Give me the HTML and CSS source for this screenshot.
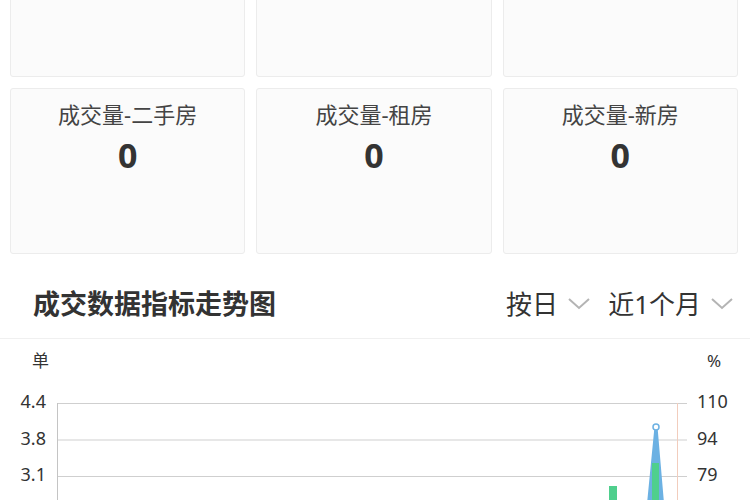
FILE: index.html
```html
<!DOCTYPE html>
<html>
<head>
    <meta charset="utf-8">
    <title>成交数据</title>
    <link rel="stylesheet" href="styles.css">
</head>
<body>
    <div class="stats">
        <div class="card"></div>
        <div class="card"></div>
        <div class="card"></div>
        <div class="card">
            <div class="card-title">成交量-二手房</div>
            <div class="card-value">0</div>
        </div>
        <div class="card">
            <div class="card-title">成交量-租房</div>
            <div class="card-value">0</div>
        </div>
        <div class="card">
            <div class="card-title">成交量-新房</div>
            <div class="card-value">0</div>
        </div>
    </div>

    <div class="trend-head">
        <h2 class="trend-title">成交数据指标走势图</h2>
        <div class="filters">
            <span class="filter">按日
                <svg class="chevron" width="22" height="12" viewBox="0 0 22 12"><polyline points="1,1 11,10 21,1"/></svg>
            </span>
            <span class="filter">近1个月
                <svg class="chevron" width="22" height="12" viewBox="0 0 22 12"><polyline points="1,1 11,10 21,1"/></svg>
            </span>
        </div>
    </div>

    <div class="chart">
        <svg width="750" height="161" viewBox="0 0 750 161">
            <text class="unit" x="32" y="28">单</text>
            <text class="unit" x="707" y="28">%</text>

            <line class="grid" x1="57" y1="64.5" x2="687" y2="64.5"/>
            <line class="grid" x1="57" y1="101" x2="687" y2="101"/>
            <line class="grid" x1="57" y1="137.5" x2="687" y2="137.5"/>
            <line class="axis" x1="57.5" y1="64" x2="57.5" y2="161"/>
            <line class="mark" x1="677.5" y1="64" x2="677.5" y2="161"/>

            <text class="tick" x="46" y="69" text-anchor="end">4.4</text>
            <text class="tick" x="46" y="106" text-anchor="end">3.8</text>
            <text class="tick" x="46" y="142" text-anchor="end">3.1</text>
            <text class="tick" x="697" y="69">110</text>
            <text class="tick" x="697" y="106">94</text>
            <text class="tick" x="697" y="142">79</text>

            <rect class="bar" x="609" y="147" width="8" height="20"/>
            <polygon class="spike" points="648,170 656,88 663,170"/>
            <rect class="bar" x="652" y="124" width="7" height="40"/>
            <circle class="dot" cx="656" cy="88" r="3"/>
        </svg>
    </div>
</body>
</html>
```

FILE: styles.css
```css
body {
  margin: 0;
  padding: 0;
  background-color: #fff;
  font-family: "Noto Sans", "Noto Sans CJK SC", sans-serif;
  color: #333;
  overflow: hidden;
}

.stats {
  display: grid;
  grid-template-columns: repeat(3, 1fr);
  gap: 11px;
  padding: 0 12px 0 10px;
  margin-top: -89px;
}

.card {
  height: 166px;
  box-sizing: border-box;
  padding-top: 11px;
  background-color: #fbfbfb;
  border: 1px solid #ececec;
  border-radius: 3px;
  text-align: center;
}

.card-title {
  font-size: 22px;
  line-height: 28px;
  color: #444;
}

.card-value {
  margin-top: 7px;
  font-size: 34px;
  line-height: 40px;
  font-weight: bold;
  color: #333;
}

.trend-head {
  display: flex;
  justify-content: space-between;
  align-items: center;
  padding: 33px 17px 17px 33px;
  border-bottom: 1px solid #f0f0f0;
}

.trend-title {
  margin: 0;
  font-size: 27px;
  line-height: 34px;
  font-weight: bold;
  color: #333;
}

.filters {
  display: flex;
  gap: 18px;
}

.filter {
  display: flex;
  align-items: center;
  gap: 10px;
  font-size: 26px;
  line-height: 34px;
  color: #333;
}

.chevron polyline {
  fill: none;
  stroke: #b4b4b4;
  stroke-width: 2;
}

.chart svg {
  display: block;
}

.unit {
  font-size: 17px;
  fill: #333;
}

.tick {
  font-size: 18px;
  fill: #333;
}

.grid {
  stroke: #cfcfcf;
  stroke-width: 1;
}

.axis {
  stroke: #c4c4c4;
  stroke-width: 1;
}

.mark {
  stroke: #f2cdbd;
  stroke-width: 1;
}

.bar {
  fill: #4fcf8d;
}

.spike {
  fill: #6cb1e3;
  stroke: #6cb1e3;
  stroke-width: 3;
  stroke-linejoin: round;
}

.dot {
  fill: #fff;
  stroke: #6cb1e3;
  stroke-width: 1.5;
}
```
